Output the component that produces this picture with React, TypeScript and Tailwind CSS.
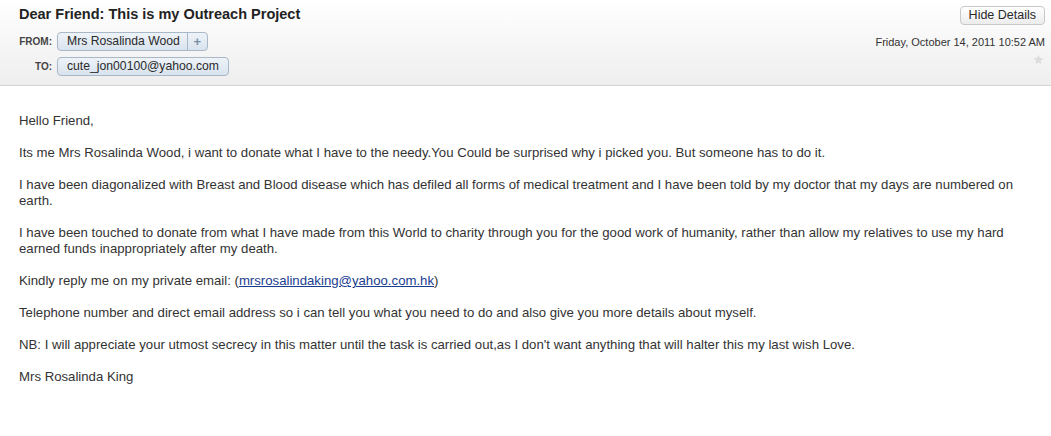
import React from "react";

function Star() {
  return (
    <svg width="11" height="11" viewBox="0 0 24 24" className="block">
      <path
        d="M12 1.5l3.1 7.1 7.7.7-5.8 5.1 1.7 7.6L12 18l-6.7 4 1.7-7.6L1.2 9.3l7.7-.7z"
        fill="#dcdcdc"
      />
    </svg>
  );
}

export default function App() {
  const font = { fontFamily: '"Liberation Sans", Arial, sans-serif' };
  return (
    <div className="w-[1051px] h-[436px] bg-white overflow-hidden" style={font}>
      <div className="h-[86px] border-b border-[#d2d2d2] bg-gradient-to-b from-white to-[#eeeeee] flex justify-between pl-[19px] pr-[6px]">
        <div className="flex flex-col pt-[5px]">
          <div className="text-[14.5px] font-bold text-[#222] leading-[18px]">
            Dear Friend: This is my Outreach Project
          </div>
          <div className="flex items-center mt-[9px]">
            <span className="w-[33px] text-right text-[10px] font-bold text-[#444] mr-[5px]">FROM:</span>
            <span className="flex h-[19px] items-stretch rounded-[4px] border border-[#a9b8c8] bg-gradient-to-b from-[#eef3f8] to-[#d9e3ee] text-[12.2px] text-[#2a2a2a]">
              <span className="pl-[9px] pr-[7px] leading-[17px]">Mrs Rosalinda Wood</span>
              <span className="border-l border-[#a9b8c8] w-[20px] flex items-center justify-center text-[#7a8fa6] font-bold text-[13px] leading-[17px]">+</span>
            </span>
          </div>
          <div className="flex items-center mt-[6px]">
            <span className="w-[33px] text-right text-[10px] font-bold text-[#444] mr-[5px]">TO:</span>
            <span className="flex h-[19px] items-center rounded-[4px] border border-[#a9b8c8] bg-gradient-to-b from-[#eef3f8] to-[#d9e3ee] text-[12.2px] text-[#2a2a2a] px-[9px] leading-[17px]">
              cute_jon00100@yahoo.com
            </span>
          </div>
        </div>
        <div className="flex flex-col items-end pt-[6px]">
          <button className="h-[19px] px-[8px] rounded-[4px] border border-[#c8c8c8] bg-gradient-to-b from-white to-[#ececec] text-[12.5px] text-[#2a2a2a] leading-[17px]">
            Hide Details
          </button>
          <div className="mt-[10px] text-[11px] text-[#333] leading-[14px]">
            Friday, October 14, 2011 10:52 AM
          </div>
          <div className="mt-[5px] mr-[1px]">
            <Star />
          </div>
        </div>
      </div>
      <div className="pl-[19px] pr-[31px] pt-[27px] text-[13.2px] text-[#333] leading-[16px] flex flex-col gap-[16px]">
        <p>Hello Friend,</p>
        <p>
          Its me Mrs Rosalinda Wood, i want to donate what I have to the needy.You Could be surprised why i picked you. But someone has to do it.
        </p>
        <p>
          I have been diagonalized with Breast and Blood disease which has defiled all forms of medical treatment and I have been told by my doctor that my days are numbered on earth.
        </p>
        <p>
          I have been touched to donate from what I have made from this World to charity through you for the good work of humanity, rather than allow my relatives to use my hard earned funds inappropriately after my death.
        </p>
        <p>
          Kindly reply me on my private email: (
          <a href="#" className="underline text-[#1a3d8f]">mrsrosalindaking@yahoo.com.hk</a>)
        </p>
        <p>
          Telephone number and direct email address so i can tell you what you need to do and also give you more details about myself.
        </p>
        <p>
          NB: I will appreciate your utmost secrecy in this matter until the task is carried out,as I don't want anything that will halter this my last wish Love.
        </p>
        <p>Mrs Rosalinda King</p>
      </div>
    </div>
  );
}
